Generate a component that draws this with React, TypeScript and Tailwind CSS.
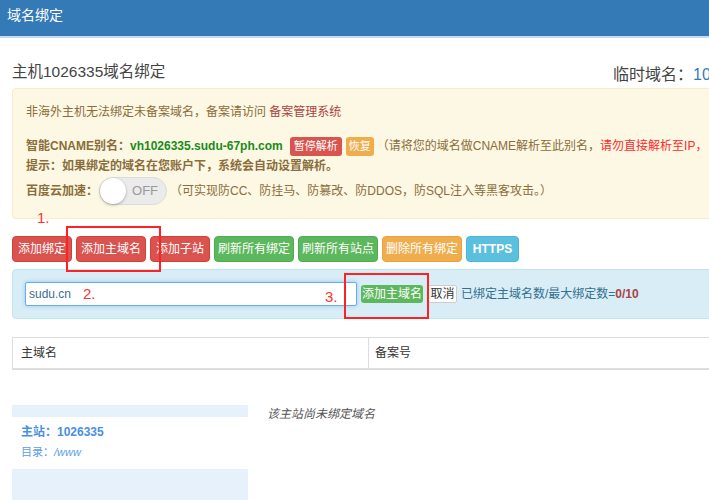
import React from "react";

const font = "font-['Liberation_Sans','Noto_Sans_CJK_SC',sans-serif]";

function Btn({ w, color, children }: { w: string; color: string; children: React.ReactNode }) {
  return (
    <div className={`flex h-[26px] items-center justify-center rounded-[4px] border text-[12px] text-white ${w} ${color}`}>
      {children}
    </div>
  );
}

export default function App() {
  return (
    <div className={`relative h-[500px] w-[709px] overflow-hidden bg-white text-[#333] ${font}`}>
      {/* header */}
      <div className="h-[38px] border-b-2 border-[#c7dbee] bg-[#337ab7] px-[7px] pt-[7px] text-[14px] leading-[16px] text-white">
        域名绑定
      </div>

      <div className="w-[960px] pl-[12px]">
        {/* title */}
        <div className="mt-[19px] flex h-[30px] items-start whitespace-nowrap">
          <div className="w-[601px] text-[15.5px] leading-[30px] text-[#444]">主机1026335域名绑定</div>
          <div className="pt-[8px] text-[16px] leading-[20px] text-[#444]">
            临时域名：<span className="text-[#337ab7]">1026335.sudu-67ph.com</span>
          </div>
        </div>

        {/* warning */}
        <div className="mt-[1px] w-[900px] whitespace-nowrap rounded-[4px] border border-[#faebcc] bg-[#fcf8e3] px-[13px] pb-[13px] pt-[14px] text-[12px] text-[#8a6d3b]">
          <div className="h-[18px] leading-[18px]">
            非海外主机无法绑定未备案域名，备案请访问 <span className="text-[#a94442]">备案管理系统</span>
          </div>
          <div className="mt-[15px] flex h-[20px] items-center">
            <b>智能CNAME别名：</b>
            <b className="text-[#1a8c1a]">vh1026335.sudu-67ph.com</b>
            <span className="ml-[7px] h-[19px] rounded-[3px] bg-[#d9534f] px-[4px] text-[11px] leading-[19px] text-white">暂停解析</span>
            <span className="ml-[4px] h-[19px] rounded-[3px] bg-[#f0ad4e] px-[3px] text-[11px] leading-[19px] text-white">恢复</span>
            <span className="ml-[3px]">（请将您的域名做CNAME解析至此别名，</span>
            <span className="text-[#ff2a2a]">请勿直接解析至IP，</span>
          </div>
          <div className="mt-[1px] h-[18px] font-bold leading-[18px]">提示：如果绑定的域名在您账户下，系统会自动设置解析。</div>
          <div className="mt-[2px] flex h-[28px] items-center">
            <b>百度云加速：</b>
            <span className="ml-[1px] flex h-[28px] w-[68px] items-center rounded-full border border-[#dcdcdc] bg-[#ebebeb]">
              <span className="h-[26px] w-[26px] rounded-full bg-white shadow-[0_1px_3px_rgba(0,0,0,0.3)]" />
              <span className="ml-[6px] text-[13px] text-[#999]">OFF</span>
            </span>
            <span className="ml-[3px]">（可实现防CC、防挂马、防篡改、防DDOS，防SQL注入等黑客攻击。）</span>
          </div>
        </div>

        {/* action buttons */}
        <div className="mt-[17px] flex gap-[4px]">
          <Btn w="w-[60px]" color="border-[#d43f3a] bg-[#d9534f]">添加绑定</Btn>
          <Btn w="w-[70px]" color="border-[#d43f3a] bg-[#d9534f]">添加主域名</Btn>
          <Btn w="w-[60px]" color="border-[#d43f3a] bg-[#d9534f]">添加子站</Btn>
          <Btn w="w-[80px]" color="border-[#4cae4c] bg-[#5cb85c]">刷新所有绑定</Btn>
          <Btn w="w-[80px]" color="border-[#4cae4c] bg-[#5cb85c]">刷新所有站点</Btn>
          <Btn w="w-[80px]" color="border-[#eea236] bg-[#f0ad4e]">删除所有绑定</Btn>
          <Btn w="w-[53px]" color="border-[#46b8da] bg-[#5bc0de] font-bold">HTTPS</Btn>
        </div>

        {/* add domain */}
        <div className="mt-[7px] h-[50px] w-[900px] rounded-[4px] border border-[#bce8f1] bg-[#d9edf7] px-[12px] pt-[12px]">
          <div className="flex h-[24px] items-center whitespace-nowrap text-[12px]">
            <div className="flex h-[24px] w-[332px] items-center rounded-[2px] border border-[#66afe9] bg-white pl-[3px] text-[#3c6e93] shadow-[0_0_4px_rgba(102,175,233,0.6)]">
              sudu.cn
            </div>
            <div className="ml-[4px] flex h-[18px] w-[62px] items-center justify-center rounded-[3px] bg-[#5cb85c] text-white">添加主域名</div>
            <div className="ml-[5px] flex h-[18px] w-[29px] items-center justify-center rounded-[2px] border border-[#ccc] bg-white text-[#333]">取消</div>
            <span className="ml-[4px] text-[#31708f]">
              已绑定主域名数/最大绑定数=<b className="text-[#a94442]">0/10</b>
            </span>
          </div>
        </div>

        {/* table header */}
        <div className="mt-[18px] flex h-[33px] w-[900px] border-x border-b-2 border-t border-[#ddd] text-[12px] text-[#333]">
          <div className="flex w-[356px] items-center border-r border-[#ddd] pl-[8px]">主域名</div>
          <div className="flex items-center pl-[6px]">备案号</div>
        </div>

        {/* site list */}
        <div className="mt-[35px] flex">
          <div className="w-[236px]">
            <div className="h-[12px] bg-[#e6f1fc]" />
            <div className="h-[52px] pl-[9px] pt-[8px]">
              <div className="text-[12px] font-bold leading-[14px] text-[#4a90e2]">主站：1026335</div>
              <div className="mt-[6px] text-[11px] leading-[14px] text-[#5b9de6]">
                目录：<i>/www</i>
              </div>
            </div>
            <div className="h-[40px] bg-[#e6f1fc]" />
          </div>
          <div className="ml-[19px] text-[12px] italic leading-[18px] text-[#555]">该主站尚未绑定域名</div>
        </div>
      </div>

      {/* screenshot annotations */}
      <span className="absolute left-[37px] top-[210px] text-[15px] leading-none text-[#ff3333]">1.</span>
      <span className="absolute left-[83px] top-[286px] text-[15px] leading-none text-[#ff3333]">2.</span>
      <span className="absolute left-[325px] top-[289px] text-[15px] leading-none text-[#ff3333]">3.</span>
      <div className="absolute left-[66px] top-[226px] h-[46px] w-[95px] border-2 border-[#f22]" />
      <div className="absolute left-[344px] top-[273px] h-[46px] w-[85px] border-2 border-[#f22]" />
    </div>
  );
}
